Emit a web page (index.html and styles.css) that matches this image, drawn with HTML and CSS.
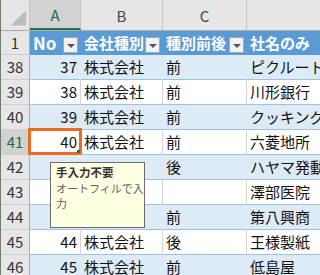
FILE: index.html
```html
<!DOCTYPE html>
<html lang="ja">
<head>
<meta charset="UTF-8">
<meta name="viewport" content="width=device-width, initial-scale=1.0">
<title>オートフィル</title>
<link rel="stylesheet" href="styles.css">
</head>
<body>
<div class="sheet">
    <div class="row colhead">
        <div class="corner">
            <svg width="29" height="30" viewBox="0 0 29 30"><polygon points="26,10 26,26 10,26" fill="#bdbdbd"/></svg>
        </div>
        <div class="ch selected">A</div>
        <div class="ch">B</div>
        <div class="ch">C</div>
        <div class="ch">D</div>
    </div>

    <div class="row thead">
        <div class="rh">1</div>
        <div class="c no">No<span class="filter"></span></div>
        <div class="c">会社種別<span class="filter"></span></div>
        <div class="c">種別前後<span class="filter"></span></div>
        <div class="c">社名のみ</div>
    </div>

    <div class="row band">
        <div class="rh">38</div>
        <div class="c num">37</div>
        <div class="c">株式会社</div>
        <div class="c">前</div>
        <div class="c">ピクルート</div>
    </div>
    <div class="row">
        <div class="rh">39</div>
        <div class="c num">38</div>
        <div class="c">株式会社</div>
        <div class="c">前</div>
        <div class="c">川形銀行</div>
    </div>
    <div class="row band">
        <div class="rh">40</div>
        <div class="c num">39</div>
        <div class="c">株式会社</div>
        <div class="c">前</div>
        <div class="c">クッキング</div>
    </div>
    <div class="row">
        <div class="rh active">41</div>
        <div class="c num current">40<span class="handle"></span></div>
        <div class="c">株式会社</div>
        <div class="c">前</div>
        <div class="c">六菱地所</div>
    </div>
    <div class="row band">
        <div class="rh">42</div>
        <div class="c num"></div>
        <div class="c"></div>
        <div class="c">後</div>
        <div class="c">ハヤマ発動機</div>
    </div>
    <div class="row">
        <div class="rh">43</div>
        <div class="c num"></div>
        <div class="c"></div>
        <div class="c"></div>
        <div class="c">澤部医院</div>
    </div>
    <div class="row band">
        <div class="rh">44</div>
        <div class="c num"></div>
        <div class="c"></div>
        <div class="c">前</div>
        <div class="c">第八興商</div>
    </div>
    <div class="row">
        <div class="rh">45</div>
        <div class="c num">44</div>
        <div class="c">株式会社</div>
        <div class="c">後</div>
        <div class="c">王様製紙</div>
    </div>
    <div class="row band">
        <div class="rh">46</div>
        <div class="c num">45</div>
        <div class="c">株式会社</div>
        <div class="c">前</div>
        <div class="c">低島屋</div>
    </div>

    <!-- input message of the selected cell -->
    <div class="tip">
        <div class="tip-title">手入力不要</div>
        <div class="tip-text">オートフィルで入力</div>
    </div>
</div>
</body>
</html>
```

FILE: styles.css
```css
body {
    margin: 0;
    padding: 0;
    background-color: #fff;
    font-family: "Noto Sans CJK JP", "Noto Sans", sans-serif;
    overflow: hidden;
}

.sheet {
    position: relative;
    width: 320px;
    height: 275px;
    overflow: hidden;
    border-left: 1px solid #6e7d6e;
    box-sizing: border-box;
}

.row {
    display: grid;
    grid-template-columns: 29px 51px 82px 84px 200px;
    height: 25px;
}

.row > div {
    box-sizing: border-box;
    display: flex;
    align-items: center;
    white-space: nowrap;
    font-size: 15px;
    line-height: 20px;
}

/* column letters */
.colhead {
    height: 31px;
    background-color: #e6e6e6;
    border-bottom: 1px solid #ababab;
    box-sizing: border-box;
}

.corner {
    border-right: 1px solid #c4c4c4;
}

.ch {
    justify-content: center;
    color: #444;
    border-right: 1px solid #c4c4c4;
    padding-top: 2px;
}

.ch.selected {
    background-color: #d2d2d2;
    color: #1e6b3f;
    border-bottom: 2px solid #217346;
}

/* row numbers */
.rh {
    justify-content: center;
    background-color: #e6e6e6;
    color: #333;
    border-right: 1px solid #ababab;
    border-bottom: 1px solid #cfcfcf;
}

.rh.active {
    background-color: #d2d2d2;
    color: #1e6b3f;
}

/* cells */
.c {
    position: relative;
    padding: 0 3px;
    color: #111;
    border-bottom: 1px solid #9bc2e6;
    border-right: 1px solid #d4d4d4;
    overflow: visible;
}

.band .c {
    background-color: #ddebf7;
    border-right-color: #ddebf7;
}

.num {
    justify-content: flex-end;
}

/* table header row */
.thead {
    height: 24px;
}

.thead .c {
    background-color: #5b9bd5;
    border-right-color: #5b9bd5;
    border-bottom-color: #5b9bd5;
    color: #fff;
    font-weight: bold;
}

.thead .no {
    font-size: 17px;
}

.filter {
    position: absolute;
    right: 2px;
    bottom: 1px;
    width: 15px;
    height: 16px;
    background-color: #f2f2f2;
    border: 1px solid #a6a6a6;
    box-sizing: border-box;
}

.filter::after {
    content: "";
    position: absolute;
    left: 3px;
    top: 6px;
    border-left: 4px solid transparent;
    border-right: 4px solid transparent;
    border-top: 4px solid #555;
}

/* selected cell */
.current::after {
    content: "";
    position: absolute;
    top: -2px;
    left: -2px;
    right: -2px;
    bottom: -1px;
    border: 3px solid #ee6a22;
}

.handle {
    position: absolute;
    right: 0;
    bottom: 1px;
    width: 3px;
    height: 3px;
    background-color: #217346;
    z-index: 1;
}

/* input message */
.tip {
    position: absolute;
    left: 49px;
    top: 162px;
    width: 95px;
    height: 66px;
    box-sizing: border-box;
    padding: 2px 0 0 5px;
    background-color: #ffffe1;
    border: 1px solid #6b6b6b;
    font-size: 11px;
    line-height: 15.5px;
    z-index: 2;
}

.tip-title {
    font-weight: bold;
    font-size: 11.5px;
    color: #333;
}

.tip-text {
    color: #5f5f6a;
}
```
